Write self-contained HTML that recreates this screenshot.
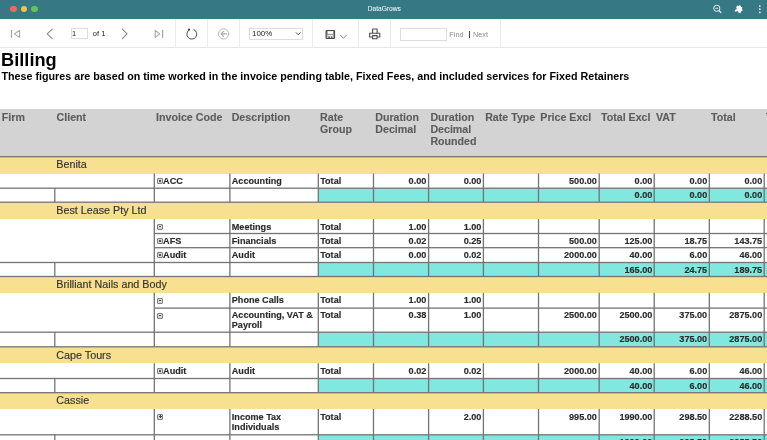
<!DOCTYPE html>
<html><head><meta charset="utf-8">
<style>
html,body{margin:0;padding:0;}
body{width:767px;height:440px;overflow:hidden;position:relative;background:#fff;font-family:"Liberation Sans",sans-serif;}
.t{position:absolute;white-space:nowrap;}
#root{position:absolute;left:0;top:0;width:767px;height:440px;will-change:transform;}
.ic{position:absolute;width:4px;height:4px;border:1px solid #808080;border-radius:1px;background:#d6d6d6;}
.ic i{position:absolute;left:1px;top:1.2px;width:2px;height:1.6px;background:#555;}
.ic i.p{left:0.5px;top:1.6px;width:3px;height:0.8px;background:#444;}
.ic i.p::after{content:"";position:absolute;left:1.1px;top:-1.1px;width:0.8px;height:3px;background:#444;}
#title{position:absolute;left:0;top:0;width:767px;height:19px;background:#367884;}
#tb{position:absolute;left:0;top:19px;width:767px;height:28px;background:#fff;border-bottom:1px solid #e6e6e6;}
.sep{position:absolute;top:19px;width:1px;height:28px;background:#ebebeb;}
</style></head><body><div id="root">
<div id="title">
  <div style="position:absolute;left:10.4px;top:5.8px;width:6.6px;height:6.6px;border-radius:50%;background:#ed6a5e;"></div>
  <div style="position:absolute;left:20.8px;top:5.8px;width:6.6px;height:6.6px;border-radius:50%;background:#f5bf4f;"></div>
  <div style="position:absolute;left:31.4px;top:5.8px;width:6.6px;height:6.6px;border-radius:50%;background:#61c454;"></div>
  <div class="t" style="left:0.8px;width:767px;text-align:center;top:4.4px;font-size:6.6px;line-height:9px;color:#e6eff0;-webkit-text-stroke:0.1px #e6eff0;">DataGrows</div>
  <svg style="position:absolute;left:0;top:0" width="767" height="19" viewBox="0 0 767 19">
    <circle cx="716.8" cy="8.3" r="3.1" fill="none" stroke="#e8f0f1" stroke-width="1"/>
    <path d="M715.3 8.3H718.3" stroke="#e8f0f1" stroke-width="0.9"/>
    <path d="M719 10.6L720.9 12.5" stroke="#e8f0f1" stroke-width="1.2" stroke-linecap="round"/>
    <path d="M736.2 6.3h1.6a1.1 1.1 0 0 1 2.2 0h1.6v1.8a1.1 1.1 0 0 1 0 2.2v2.2h-2.2a1.1 1.1 0 0 0-2.2 0h-1.6v-1.8a1.1 1.1 0 0 0 0-2.2Z" fill="#fff" transform="rotate(20 738.9 9.2)"/>
    <circle cx="759.8" cy="6" r="0.85" fill="#fff"/>
    <circle cx="759.8" cy="9.2" r="0.85" fill="#fff"/>
    <circle cx="759.8" cy="12.4" r="0.85" fill="#fff"/>
  </svg>
</div>
<div id="tb"></div>
<div class="sep" style="left:174.8px"></div>
<div class="sep" style="left:207px"></div>
<div class="sep" style="left:239.2px"></div>
<div class="sep" style="left:311.8px"></div>
<div class="sep" style="left:357.9px"></div>
<div class="sep" style="left:389.9px"></div>
<div class="sep" style="left:499.8px"></div>
<svg style="position:absolute;left:0;top:0" width="767" height="48" viewBox="0 0 767 48">
 <g fill="none" stroke-linecap="round" stroke-linejoin="round">
  <path d="M11.5 30.3V37.5" stroke="#a8a8a8" stroke-width="1.2"/>
  <path d="M19.5 30.5L14.3 33.9L19.5 37.4Z" stroke="#a8a8a8" stroke-width="1.1"/>
  <path d="M52.2 29.2L47.2 33.9L52.2 38.6" stroke="#8a8a8a" stroke-width="1.1"/>
  <path d="M122.3 29.2L127.1 33.9L122.3 38.6" stroke="#8a8a8a" stroke-width="1.1"/>
  <path d="M155.2 30.5L159.7 33.9L155.2 37.4Z" stroke="#a8a8a8" stroke-width="1.1"/>
  <path d="M162.6 30.3V37.5" stroke="#a8a8a8" stroke-width="1.2"/>
  <path d="M189.4 29.7A5 5 0 1 0 193.8 29.5" stroke="#4a4a4a" stroke-width="0.95"/>
  <circle cx="189.1" cy="29.5" r="0.95" fill="#222" stroke="none"/>
  <circle cx="223.6" cy="33.9" r="5.1" stroke="#b8b8b8" stroke-width="1"/>
  <path d="M226.6 33.9H221.3M223.4 31.3L221.1 33.9L223.4 36.4" stroke="#aaaaaa" stroke-width="1.15"/>
  <rect x="326.1" y="30.5" width="8.4" height="8" rx="0.8" fill="#9a9a9a" stroke="#4a4a4a" stroke-width="1.2"/>
  <rect x="327.8" y="31.2" width="5.2" height="2.6" fill="#fff" stroke="none"/>
  <rect x="327.5" y="35.2" width="5.7" height="2.7" fill="#fff" stroke="none"/>
  <rect x="328.2" y="36.4" width="1.8" height="1.5" fill="#555" stroke="none"/>
  <rect x="330.8" y="36.4" width="1.8" height="1.5" fill="#555" stroke="none"/>
  <path d="M340.6 35.4L343.4 38.3L346.2 35.4" stroke="#777" stroke-width="0.9"/>
  <path d="M296.2 32.7L298.2 34.8L300.2 32.7" stroke="#444" stroke-width="0.95"/>
  <path d="M372.6 33V29H377.1V33" stroke="#505050" stroke-width="1.1"/>
  <path d="M372.2 37H369.6V33.2H379.8V37H377.4" stroke="#505050" stroke-width="1.1"/>
  <path d="M372.6 35.6H377.1V38.7H372.6Z" stroke="#505050" stroke-width="1.1"/>
 </g>
</svg>
<div style="position:absolute;left:70.8px;top:28.3px;width:14.9px;height:9.2px;border:1px solid #ddd;"></div>
<div class="t" style="left:72px;top:29.2px;font-size:7.5px;line-height:10px;color:#222;">1</div>
<div class="t" style="left:92.8px;top:29.2px;font-size:7.5px;line-height:10px;color:#222;">of 1</div>
<div style="position:absolute;left:249.3px;top:28.2px;width:51.6px;height:10.3px;border:1px solid #ddd;"></div>
<div class="t" style="left:252px;top:29.2px;font-size:7.9px;line-height:10px;color:#222;">100%</div>
<div style="position:absolute;left:400px;top:28.3px;width:44.6px;height:10.5px;border:1px solid #ddd;"></div>
<div class="t" style="left:449.3px;top:29.6px;font-size:7.3px;line-height:10px;color:#8c8c8c;">Find</div>
<div style="position:absolute;left:469px;top:30.5px;width:1px;height:7px;background:#444;"></div>
<div class="t" style="left:473px;top:29.6px;font-size:7.3px;line-height:10px;color:#8c8c8c;">Next</div>
<div class="t" style="left:1.1px;top:49.5px;font-size:18.2px;line-height:21px;font-weight:bold;color:#000;">Billing</div>
<div class="t" style="left:1.5px;top:70px;font-size:10.72px;line-height:12px;font-weight:bold;color:#000;">These figures are based on time worked in the invoice pending table, Fixed Fees, and included services for Fixed Retainers</div>
<div style="position:absolute;left:0.00px;top:108.80px;width:767.00px;height:47.70px;background:#d3d3d3"></div>
<div style="position:absolute;left:0.00px;top:156.50px;width:767.00px;height:17.00px;background:#f7e08f"></div>
<div style="position:absolute;left:318.30px;top:188.00px;width:448.70px;height:14.00px;background:#80e8df"></div>
<div style="position:absolute;left:0.00px;top:202.00px;width:767.00px;height:17.00px;background:#f7e08f"></div>
<div style="position:absolute;left:318.30px;top:262.30px;width:448.70px;height:14.00px;background:#80e8df"></div>
<div style="position:absolute;left:0.00px;top:276.30px;width:767.00px;height:16.50px;background:#f7e08f"></div>
<div style="position:absolute;left:318.30px;top:332.00px;width:448.70px;height:14.60px;background:#80e8df"></div>
<div style="position:absolute;left:0.00px;top:346.60px;width:767.00px;height:16.60px;background:#f7e08f"></div>
<div style="position:absolute;left:318.30px;top:378.30px;width:448.70px;height:14.20px;background:#80e8df"></div>
<div style="position:absolute;left:0.00px;top:392.50px;width:767.00px;height:16.50px;background:#f7e08f"></div>
<div style="position:absolute;left:318.30px;top:434.60px;width:448.70px;height:14.40px;background:#80e8df"></div>
<svg style="position:absolute;left:0;top:0" width="767" height="440" viewBox="0 0 767 440"><g fill="#747474"><rect x="0.00" y="156.05" width="767.00" height="1.3"/><rect x="154.30" y="187.55" width="612.70" height="1.3"/><rect x="153.65" y="173.50" width="1.3" height="14.50"/><rect x="229.25" y="173.50" width="1.3" height="14.50"/><rect x="317.65" y="173.50" width="1.3" height="14.50"/><rect x="372.85" y="173.50" width="1.3" height="14.50"/><rect x="427.95" y="173.50" width="1.3" height="14.50"/><rect x="482.75" y="173.50" width="1.3" height="14.50"/><rect x="537.85" y="173.50" width="1.3" height="14.50"/><rect x="598.55" y="173.50" width="1.3" height="14.50"/><rect x="653.55" y="173.50" width="1.3" height="14.50"/><rect x="708.65" y="173.50" width="1.3" height="14.50"/><rect x="763.55" y="173.50" width="1.3" height="14.50"/><rect x="0.00" y="187.55" width="154.30" height="1.3"/><rect x="0.00" y="201.55" width="767.00" height="1.3"/><rect x="54.15" y="188.00" width="1.3" height="14.00"/><rect x="153.65" y="188.00" width="1.3" height="14.00"/><rect x="229.25" y="188.00" width="1.3" height="14.00"/><rect x="317.65" y="188.00" width="1.3" height="14.00"/><rect x="372.85" y="188.00" width="1.3" height="14.00"/><rect x="427.95" y="188.00" width="1.3" height="14.00"/><rect x="482.75" y="188.00" width="1.3" height="14.00"/><rect x="537.85" y="188.00" width="1.3" height="14.00"/><rect x="598.55" y="188.00" width="1.3" height="14.00"/><rect x="653.55" y="188.00" width="1.3" height="14.00"/><rect x="708.65" y="188.00" width="1.3" height="14.00"/><rect x="763.55" y="188.00" width="1.3" height="14.00"/><rect x="154.30" y="232.85" width="612.70" height="1.3"/><rect x="153.65" y="219.00" width="1.3" height="14.30"/><rect x="229.25" y="219.00" width="1.3" height="14.30"/><rect x="317.65" y="219.00" width="1.3" height="14.30"/><rect x="372.85" y="219.00" width="1.3" height="14.30"/><rect x="427.95" y="219.00" width="1.3" height="14.30"/><rect x="482.75" y="219.00" width="1.3" height="14.30"/><rect x="537.85" y="219.00" width="1.3" height="14.30"/><rect x="598.55" y="219.00" width="1.3" height="14.30"/><rect x="653.55" y="219.00" width="1.3" height="14.30"/><rect x="708.65" y="219.00" width="1.3" height="14.30"/><rect x="763.55" y="219.00" width="1.3" height="14.30"/><rect x="154.30" y="247.05" width="612.70" height="1.3"/><rect x="153.65" y="233.30" width="1.3" height="14.20"/><rect x="229.25" y="233.30" width="1.3" height="14.20"/><rect x="317.65" y="233.30" width="1.3" height="14.20"/><rect x="372.85" y="233.30" width="1.3" height="14.20"/><rect x="427.95" y="233.30" width="1.3" height="14.20"/><rect x="482.75" y="233.30" width="1.3" height="14.20"/><rect x="537.85" y="233.30" width="1.3" height="14.20"/><rect x="598.55" y="233.30" width="1.3" height="14.20"/><rect x="653.55" y="233.30" width="1.3" height="14.20"/><rect x="708.65" y="233.30" width="1.3" height="14.20"/><rect x="763.55" y="233.30" width="1.3" height="14.20"/><rect x="154.30" y="261.85" width="612.70" height="1.3"/><rect x="153.65" y="247.50" width="1.3" height="14.80"/><rect x="229.25" y="247.50" width="1.3" height="14.80"/><rect x="317.65" y="247.50" width="1.3" height="14.80"/><rect x="372.85" y="247.50" width="1.3" height="14.80"/><rect x="427.95" y="247.50" width="1.3" height="14.80"/><rect x="482.75" y="247.50" width="1.3" height="14.80"/><rect x="537.85" y="247.50" width="1.3" height="14.80"/><rect x="598.55" y="247.50" width="1.3" height="14.80"/><rect x="653.55" y="247.50" width="1.3" height="14.80"/><rect x="708.65" y="247.50" width="1.3" height="14.80"/><rect x="763.55" y="247.50" width="1.3" height="14.80"/><rect x="0.00" y="261.85" width="154.30" height="1.3"/><rect x="0.00" y="275.85" width="767.00" height="1.3"/><rect x="54.15" y="262.30" width="1.3" height="14.00"/><rect x="153.65" y="262.30" width="1.3" height="14.00"/><rect x="229.25" y="262.30" width="1.3" height="14.00"/><rect x="317.65" y="262.30" width="1.3" height="14.00"/><rect x="372.85" y="262.30" width="1.3" height="14.00"/><rect x="427.95" y="262.30" width="1.3" height="14.00"/><rect x="482.75" y="262.30" width="1.3" height="14.00"/><rect x="537.85" y="262.30" width="1.3" height="14.00"/><rect x="598.55" y="262.30" width="1.3" height="14.00"/><rect x="653.55" y="262.30" width="1.3" height="14.00"/><rect x="708.65" y="262.30" width="1.3" height="14.00"/><rect x="763.55" y="262.30" width="1.3" height="14.00"/><rect x="154.30" y="307.45" width="612.70" height="1.3"/><rect x="153.65" y="292.80" width="1.3" height="15.10"/><rect x="229.25" y="292.80" width="1.3" height="15.10"/><rect x="317.65" y="292.80" width="1.3" height="15.10"/><rect x="372.85" y="292.80" width="1.3" height="15.10"/><rect x="427.95" y="292.80" width="1.3" height="15.10"/><rect x="482.75" y="292.80" width="1.3" height="15.10"/><rect x="537.85" y="292.80" width="1.3" height="15.10"/><rect x="598.55" y="292.80" width="1.3" height="15.10"/><rect x="653.55" y="292.80" width="1.3" height="15.10"/><rect x="708.65" y="292.80" width="1.3" height="15.10"/><rect x="763.55" y="292.80" width="1.3" height="15.10"/><rect x="154.30" y="331.55" width="612.70" height="1.3"/><rect x="153.65" y="307.90" width="1.3" height="24.10"/><rect x="229.25" y="307.90" width="1.3" height="24.10"/><rect x="317.65" y="307.90" width="1.3" height="24.10"/><rect x="372.85" y="307.90" width="1.3" height="24.10"/><rect x="427.95" y="307.90" width="1.3" height="24.10"/><rect x="482.75" y="307.90" width="1.3" height="24.10"/><rect x="537.85" y="307.90" width="1.3" height="24.10"/><rect x="598.55" y="307.90" width="1.3" height="24.10"/><rect x="653.55" y="307.90" width="1.3" height="24.10"/><rect x="708.65" y="307.90" width="1.3" height="24.10"/><rect x="763.55" y="307.90" width="1.3" height="24.10"/><rect x="0.00" y="331.55" width="154.30" height="1.3"/><rect x="0.00" y="346.15" width="767.00" height="1.3"/><rect x="54.15" y="332.00" width="1.3" height="14.60"/><rect x="153.65" y="332.00" width="1.3" height="14.60"/><rect x="229.25" y="332.00" width="1.3" height="14.60"/><rect x="317.65" y="332.00" width="1.3" height="14.60"/><rect x="372.85" y="332.00" width="1.3" height="14.60"/><rect x="427.95" y="332.00" width="1.3" height="14.60"/><rect x="482.75" y="332.00" width="1.3" height="14.60"/><rect x="537.85" y="332.00" width="1.3" height="14.60"/><rect x="598.55" y="332.00" width="1.3" height="14.60"/><rect x="653.55" y="332.00" width="1.3" height="14.60"/><rect x="708.65" y="332.00" width="1.3" height="14.60"/><rect x="763.55" y="332.00" width="1.3" height="14.60"/><rect x="154.30" y="377.85" width="612.70" height="1.3"/><rect x="153.65" y="363.20" width="1.3" height="15.10"/><rect x="229.25" y="363.20" width="1.3" height="15.10"/><rect x="317.65" y="363.20" width="1.3" height="15.10"/><rect x="372.85" y="363.20" width="1.3" height="15.10"/><rect x="427.95" y="363.20" width="1.3" height="15.10"/><rect x="482.75" y="363.20" width="1.3" height="15.10"/><rect x="537.85" y="363.20" width="1.3" height="15.10"/><rect x="598.55" y="363.20" width="1.3" height="15.10"/><rect x="653.55" y="363.20" width="1.3" height="15.10"/><rect x="708.65" y="363.20" width="1.3" height="15.10"/><rect x="763.55" y="363.20" width="1.3" height="15.10"/><rect x="0.00" y="377.85" width="154.30" height="1.3"/><rect x="0.00" y="392.05" width="767.00" height="1.3"/><rect x="54.15" y="378.30" width="1.3" height="14.20"/><rect x="153.65" y="378.30" width="1.3" height="14.20"/><rect x="229.25" y="378.30" width="1.3" height="14.20"/><rect x="317.65" y="378.30" width="1.3" height="14.20"/><rect x="372.85" y="378.30" width="1.3" height="14.20"/><rect x="427.95" y="378.30" width="1.3" height="14.20"/><rect x="482.75" y="378.30" width="1.3" height="14.20"/><rect x="537.85" y="378.30" width="1.3" height="14.20"/><rect x="598.55" y="378.30" width="1.3" height="14.20"/><rect x="653.55" y="378.30" width="1.3" height="14.20"/><rect x="708.65" y="378.30" width="1.3" height="14.20"/><rect x="763.55" y="378.30" width="1.3" height="14.20"/><rect x="154.30" y="434.15" width="612.70" height="1.3"/><rect x="153.65" y="409.00" width="1.3" height="25.60"/><rect x="229.25" y="409.00" width="1.3" height="25.60"/><rect x="317.65" y="409.00" width="1.3" height="25.60"/><rect x="372.85" y="409.00" width="1.3" height="25.60"/><rect x="427.95" y="409.00" width="1.3" height="25.60"/><rect x="482.75" y="409.00" width="1.3" height="25.60"/><rect x="537.85" y="409.00" width="1.3" height="25.60"/><rect x="598.55" y="409.00" width="1.3" height="25.60"/><rect x="653.55" y="409.00" width="1.3" height="25.60"/><rect x="708.65" y="409.00" width="1.3" height="25.60"/><rect x="763.55" y="409.00" width="1.3" height="25.60"/><rect x="0.00" y="434.15" width="154.30" height="1.3"/><rect x="0.00" y="448.55" width="767.00" height="1.3"/><rect x="54.15" y="434.60" width="1.3" height="14.40"/><rect x="153.65" y="434.60" width="1.3" height="14.40"/><rect x="229.25" y="434.60" width="1.3" height="14.40"/><rect x="317.65" y="434.60" width="1.3" height="14.40"/><rect x="372.85" y="434.60" width="1.3" height="14.40"/><rect x="427.95" y="434.60" width="1.3" height="14.40"/><rect x="482.75" y="434.60" width="1.3" height="14.40"/><rect x="537.85" y="434.60" width="1.3" height="14.40"/><rect x="598.55" y="434.60" width="1.3" height="14.40"/><rect x="653.55" y="434.60" width="1.3" height="14.40"/><rect x="708.65" y="434.60" width="1.3" height="14.40"/><rect x="763.55" y="434.60" width="1.3" height="14.40"/></g></svg>
<div class="t" style="left:1.80px;top:110.90px;font-weight:bold;color:#5c5c5c;font-size:10.65px;line-height:12.2px;-webkit-text-stroke:0.12px #5c5c5c;">Firm</div>
<div class="t" style="left:56.60px;top:110.90px;font-weight:bold;color:#5c5c5c;font-size:10.65px;line-height:12.2px;-webkit-text-stroke:0.12px #5c5c5c;">Client</div>
<div class="t" style="left:156.10px;top:110.90px;font-weight:bold;color:#5c5c5c;font-size:10.65px;line-height:12.2px;-webkit-text-stroke:0.12px #5c5c5c;">Invoice Code</div>
<div class="t" style="left:231.70px;top:110.90px;font-weight:bold;color:#5c5c5c;font-size:10.65px;line-height:12.2px;-webkit-text-stroke:0.12px #5c5c5c;">Description</div>
<div class="t" style="left:320.10px;top:110.90px;font-weight:bold;color:#5c5c5c;font-size:10.65px;line-height:12.2px;-webkit-text-stroke:0.12px #5c5c5c;">Rate<br>Group</div>
<div class="t" style="left:375.30px;top:110.90px;font-weight:bold;color:#5c5c5c;font-size:10.65px;line-height:12.2px;-webkit-text-stroke:0.12px #5c5c5c;">Duration<br>Decimal</div>
<div class="t" style="left:430.40px;top:110.90px;font-weight:bold;color:#5c5c5c;font-size:10.65px;line-height:12.2px;-webkit-text-stroke:0.12px #5c5c5c;">Duration<br>Decimal<br>Rounded</div>
<div class="t" style="left:485.20px;top:110.90px;font-weight:bold;color:#5c5c5c;font-size:10.65px;line-height:12.2px;-webkit-text-stroke:0.12px #5c5c5c;">Rate Type</div>
<div class="t" style="left:540.30px;top:110.90px;font-weight:bold;color:#5c5c5c;font-size:10.65px;line-height:12.2px;-webkit-text-stroke:0.12px #5c5c5c;">Price Excl</div>
<div class="t" style="left:601.00px;top:110.90px;font-weight:bold;color:#5c5c5c;font-size:10.65px;line-height:12.2px;-webkit-text-stroke:0.12px #5c5c5c;">Total Excl</div>
<div class="t" style="left:656.00px;top:110.90px;font-weight:bold;color:#5c5c5c;font-size:10.65px;line-height:12.2px;-webkit-text-stroke:0.12px #5c5c5c;">VAT</div>
<div class="t" style="left:711.10px;top:110.90px;font-weight:bold;color:#5c5c5c;font-size:10.65px;line-height:12.2px;-webkit-text-stroke:0.12px #5c5c5c;">Total</div>
<div class="t" style="left:766.00px;top:110.90px;font-weight:bold;color:#5c5c5c;font-size:10.65px;line-height:12.2px;-webkit-text-stroke:0.12px #5c5c5c;">Total</div>
<div class="t" style="left:56.30px;top:158.40px;color:#333;font-size:10.75px;line-height:12px;-webkit-text-stroke:0.15px #333;">Benita</div>
<div class="ic" style="left:157.10px;top:178.20px"><i class="m"></i></div>
<div class="t" style="left:163.10px;top:176.10px;font-weight:bold;color:#2a2a2a;font-size:9.1px;line-height:10.3px;-webkit-text-stroke:0.15px #2a2a2a;">ACC</div>
<div class="t" style="left:231.80px;top:176.10px;font-weight:bold;color:#2a2a2a;font-size:9.1px;line-height:10.3px;-webkit-text-stroke:0.15px #2a2a2a;">Accounting</div>
<div class="t" style="left:320.20px;top:176.10px;font-weight:bold;color:#2a2a2a;font-size:9.1px;line-height:10.3px;-webkit-text-stroke:0.15px #2a2a2a;">Total</div>
<div class="t" style="left:373.50px;top:176.10px;width:52.80px;text-align:right;font-weight:bold;color:#2a2a2a;font-size:9.1px;line-height:10.3px;-webkit-text-stroke:0.15px #2a2a2a;">0.00</div>
<div class="t" style="left:428.60px;top:176.10px;width:52.80px;text-align:right;font-weight:bold;color:#2a2a2a;font-size:9.1px;line-height:10.3px;-webkit-text-stroke:0.15px #2a2a2a;">0.00</div>
<div class="t" style="left:538.50px;top:176.10px;width:58.40px;text-align:right;font-weight:bold;color:#2a2a2a;font-size:9.1px;line-height:10.3px;-webkit-text-stroke:0.15px #2a2a2a;">500.00</div>
<div class="t" style="left:599.20px;top:176.10px;width:53.10px;text-align:right;font-weight:bold;color:#2a2a2a;font-size:9.1px;line-height:10.3px;-webkit-text-stroke:0.15px #2a2a2a;">0.00</div>
<div class="t" style="left:654.20px;top:176.10px;width:53.00px;text-align:right;font-weight:bold;color:#2a2a2a;font-size:9.1px;line-height:10.3px;-webkit-text-stroke:0.15px #2a2a2a;">0.00</div>
<div class="t" style="left:709.30px;top:176.10px;width:52.90px;text-align:right;font-weight:bold;color:#2a2a2a;font-size:9.1px;line-height:10.3px;-webkit-text-stroke:0.15px #2a2a2a;">0.00</div>
<div class="t" style="left:599.20px;top:190.20px;width:53.10px;text-align:right;font-weight:bold;color:#2a2a2a;font-size:9.1px;line-height:10.3px;-webkit-text-stroke:0.15px #2a2a2a;">0.00</div>
<div class="t" style="left:654.20px;top:190.20px;width:53.00px;text-align:right;font-weight:bold;color:#2a2a2a;font-size:9.1px;line-height:10.3px;-webkit-text-stroke:0.15px #2a2a2a;">0.00</div>
<div class="t" style="left:709.30px;top:190.20px;width:52.90px;text-align:right;font-weight:bold;color:#2a2a2a;font-size:9.1px;line-height:10.3px;-webkit-text-stroke:0.15px #2a2a2a;">0.00</div>
<div class="t" style="left:56.30px;top:203.90px;color:#333;font-size:10.75px;line-height:12px;-webkit-text-stroke:0.15px #333;">Best Lease Pty Ltd</div>
<div class="ic" style="left:157.10px;top:223.70px"><i class="m"></i></div>
<div class="t" style="left:231.80px;top:221.60px;font-weight:bold;color:#2a2a2a;font-size:9.1px;line-height:10.3px;-webkit-text-stroke:0.15px #2a2a2a;">Meetings</div>
<div class="t" style="left:320.20px;top:221.60px;font-weight:bold;color:#2a2a2a;font-size:9.1px;line-height:10.3px;-webkit-text-stroke:0.15px #2a2a2a;">Total</div>
<div class="t" style="left:373.50px;top:221.60px;width:52.80px;text-align:right;font-weight:bold;color:#2a2a2a;font-size:9.1px;line-height:10.3px;-webkit-text-stroke:0.15px #2a2a2a;">1.00</div>
<div class="t" style="left:428.60px;top:221.60px;width:52.80px;text-align:right;font-weight:bold;color:#2a2a2a;font-size:9.1px;line-height:10.3px;-webkit-text-stroke:0.15px #2a2a2a;">1.00</div>
<div class="ic" style="left:157.10px;top:238.00px"><i class="m"></i></div>
<div class="t" style="left:163.10px;top:235.90px;font-weight:bold;color:#2a2a2a;font-size:9.1px;line-height:10.3px;-webkit-text-stroke:0.15px #2a2a2a;">AFS</div>
<div class="t" style="left:231.80px;top:235.90px;font-weight:bold;color:#2a2a2a;font-size:9.1px;line-height:10.3px;-webkit-text-stroke:0.15px #2a2a2a;">Financials</div>
<div class="t" style="left:320.20px;top:235.90px;font-weight:bold;color:#2a2a2a;font-size:9.1px;line-height:10.3px;-webkit-text-stroke:0.15px #2a2a2a;">Total</div>
<div class="t" style="left:373.50px;top:235.90px;width:52.80px;text-align:right;font-weight:bold;color:#2a2a2a;font-size:9.1px;line-height:10.3px;-webkit-text-stroke:0.15px #2a2a2a;">0.02</div>
<div class="t" style="left:428.60px;top:235.90px;width:52.80px;text-align:right;font-weight:bold;color:#2a2a2a;font-size:9.1px;line-height:10.3px;-webkit-text-stroke:0.15px #2a2a2a;">0.25</div>
<div class="t" style="left:538.50px;top:235.90px;width:58.40px;text-align:right;font-weight:bold;color:#2a2a2a;font-size:9.1px;line-height:10.3px;-webkit-text-stroke:0.15px #2a2a2a;">500.00</div>
<div class="t" style="left:599.20px;top:235.90px;width:53.10px;text-align:right;font-weight:bold;color:#2a2a2a;font-size:9.1px;line-height:10.3px;-webkit-text-stroke:0.15px #2a2a2a;">125.00</div>
<div class="t" style="left:654.20px;top:235.90px;width:53.00px;text-align:right;font-weight:bold;color:#2a2a2a;font-size:9.1px;line-height:10.3px;-webkit-text-stroke:0.15px #2a2a2a;">18.75</div>
<div class="t" style="left:709.30px;top:235.90px;width:52.90px;text-align:right;font-weight:bold;color:#2a2a2a;font-size:9.1px;line-height:10.3px;-webkit-text-stroke:0.15px #2a2a2a;">143.75</div>
<div class="ic" style="left:157.10px;top:252.20px"><i class="m"></i></div>
<div class="t" style="left:163.10px;top:250.10px;font-weight:bold;color:#2a2a2a;font-size:9.1px;line-height:10.3px;-webkit-text-stroke:0.15px #2a2a2a;">Audit</div>
<div class="t" style="left:231.80px;top:250.10px;font-weight:bold;color:#2a2a2a;font-size:9.1px;line-height:10.3px;-webkit-text-stroke:0.15px #2a2a2a;">Audit</div>
<div class="t" style="left:320.20px;top:250.10px;font-weight:bold;color:#2a2a2a;font-size:9.1px;line-height:10.3px;-webkit-text-stroke:0.15px #2a2a2a;">Total</div>
<div class="t" style="left:373.50px;top:250.10px;width:52.80px;text-align:right;font-weight:bold;color:#2a2a2a;font-size:9.1px;line-height:10.3px;-webkit-text-stroke:0.15px #2a2a2a;">0.00</div>
<div class="t" style="left:428.60px;top:250.10px;width:52.80px;text-align:right;font-weight:bold;color:#2a2a2a;font-size:9.1px;line-height:10.3px;-webkit-text-stroke:0.15px #2a2a2a;">0.02</div>
<div class="t" style="left:538.50px;top:250.10px;width:58.40px;text-align:right;font-weight:bold;color:#2a2a2a;font-size:9.1px;line-height:10.3px;-webkit-text-stroke:0.15px #2a2a2a;">2000.00</div>
<div class="t" style="left:599.20px;top:250.10px;width:53.10px;text-align:right;font-weight:bold;color:#2a2a2a;font-size:9.1px;line-height:10.3px;-webkit-text-stroke:0.15px #2a2a2a;">40.00</div>
<div class="t" style="left:654.20px;top:250.10px;width:53.00px;text-align:right;font-weight:bold;color:#2a2a2a;font-size:9.1px;line-height:10.3px;-webkit-text-stroke:0.15px #2a2a2a;">6.00</div>
<div class="t" style="left:709.30px;top:250.10px;width:52.90px;text-align:right;font-weight:bold;color:#2a2a2a;font-size:9.1px;line-height:10.3px;-webkit-text-stroke:0.15px #2a2a2a;">46.00</div>
<div class="t" style="left:599.20px;top:264.50px;width:53.10px;text-align:right;font-weight:bold;color:#2a2a2a;font-size:9.1px;line-height:10.3px;-webkit-text-stroke:0.15px #2a2a2a;">165.00</div>
<div class="t" style="left:654.20px;top:264.50px;width:53.00px;text-align:right;font-weight:bold;color:#2a2a2a;font-size:9.1px;line-height:10.3px;-webkit-text-stroke:0.15px #2a2a2a;">24.75</div>
<div class="t" style="left:709.30px;top:264.50px;width:52.90px;text-align:right;font-weight:bold;color:#2a2a2a;font-size:9.1px;line-height:10.3px;-webkit-text-stroke:0.15px #2a2a2a;">189.75</div>
<div class="t" style="left:56.30px;top:278.20px;color:#333;font-size:10.75px;line-height:12px;-webkit-text-stroke:0.15px #333;">Brilliant Nails and Body</div>
<div class="ic" style="left:157.10px;top:297.50px"><i class="m"></i></div>
<div class="t" style="left:231.80px;top:295.40px;font-weight:bold;color:#2a2a2a;font-size:9.1px;line-height:10.3px;-webkit-text-stroke:0.15px #2a2a2a;">Phone Calls</div>
<div class="t" style="left:320.20px;top:295.40px;font-weight:bold;color:#2a2a2a;font-size:9.1px;line-height:10.3px;-webkit-text-stroke:0.15px #2a2a2a;">Total</div>
<div class="t" style="left:373.50px;top:295.40px;width:52.80px;text-align:right;font-weight:bold;color:#2a2a2a;font-size:9.1px;line-height:10.3px;-webkit-text-stroke:0.15px #2a2a2a;">1.00</div>
<div class="t" style="left:428.60px;top:295.40px;width:52.80px;text-align:right;font-weight:bold;color:#2a2a2a;font-size:9.1px;line-height:10.3px;-webkit-text-stroke:0.15px #2a2a2a;">1.00</div>
<div class="ic" style="left:157.10px;top:312.60px"><i class="m"></i></div>
<div class="t" style="left:231.80px;top:309.60px;font-weight:bold;color:#2a2a2a;font-size:9.1px;line-height:10.3px;-webkit-text-stroke:0.15px #2a2a2a;">Accounting, VAT &amp;<br>Payroll</div>
<div class="t" style="left:320.20px;top:309.60px;font-weight:bold;color:#2a2a2a;font-size:9.1px;line-height:10.3px;-webkit-text-stroke:0.15px #2a2a2a;">Total</div>
<div class="t" style="left:373.50px;top:309.60px;width:52.80px;text-align:right;font-weight:bold;color:#2a2a2a;font-size:9.1px;line-height:10.3px;-webkit-text-stroke:0.15px #2a2a2a;">0.38</div>
<div class="t" style="left:428.60px;top:309.60px;width:52.80px;text-align:right;font-weight:bold;color:#2a2a2a;font-size:9.1px;line-height:10.3px;-webkit-text-stroke:0.15px #2a2a2a;">1.00</div>
<div class="t" style="left:538.50px;top:309.60px;width:58.40px;text-align:right;font-weight:bold;color:#2a2a2a;font-size:9.1px;line-height:10.3px;-webkit-text-stroke:0.15px #2a2a2a;">2500.00</div>
<div class="t" style="left:599.20px;top:309.60px;width:53.10px;text-align:right;font-weight:bold;color:#2a2a2a;font-size:9.1px;line-height:10.3px;-webkit-text-stroke:0.15px #2a2a2a;">2500.00</div>
<div class="t" style="left:654.20px;top:309.60px;width:53.00px;text-align:right;font-weight:bold;color:#2a2a2a;font-size:9.1px;line-height:10.3px;-webkit-text-stroke:0.15px #2a2a2a;">375.00</div>
<div class="t" style="left:709.30px;top:309.60px;width:52.90px;text-align:right;font-weight:bold;color:#2a2a2a;font-size:9.1px;line-height:10.3px;-webkit-text-stroke:0.15px #2a2a2a;">2875.00</div>
<div class="t" style="left:599.20px;top:334.20px;width:53.10px;text-align:right;font-weight:bold;color:#2a2a2a;font-size:9.1px;line-height:10.3px;-webkit-text-stroke:0.15px #2a2a2a;">2500.00</div>
<div class="t" style="left:654.20px;top:334.20px;width:53.00px;text-align:right;font-weight:bold;color:#2a2a2a;font-size:9.1px;line-height:10.3px;-webkit-text-stroke:0.15px #2a2a2a;">375.00</div>
<div class="t" style="left:709.30px;top:334.20px;width:52.90px;text-align:right;font-weight:bold;color:#2a2a2a;font-size:9.1px;line-height:10.3px;-webkit-text-stroke:0.15px #2a2a2a;">2875.00</div>
<div class="t" style="left:56.30px;top:348.50px;color:#333;font-size:10.75px;line-height:12px;-webkit-text-stroke:0.15px #333;">Cape Tours</div>
<div class="ic" style="left:157.10px;top:367.90px"><i class="m"></i></div>
<div class="t" style="left:163.10px;top:365.80px;font-weight:bold;color:#2a2a2a;font-size:9.1px;line-height:10.3px;-webkit-text-stroke:0.15px #2a2a2a;">Audit</div>
<div class="t" style="left:231.80px;top:365.80px;font-weight:bold;color:#2a2a2a;font-size:9.1px;line-height:10.3px;-webkit-text-stroke:0.15px #2a2a2a;">Audit</div>
<div class="t" style="left:320.20px;top:365.80px;font-weight:bold;color:#2a2a2a;font-size:9.1px;line-height:10.3px;-webkit-text-stroke:0.15px #2a2a2a;">Total</div>
<div class="t" style="left:373.50px;top:365.80px;width:52.80px;text-align:right;font-weight:bold;color:#2a2a2a;font-size:9.1px;line-height:10.3px;-webkit-text-stroke:0.15px #2a2a2a;">0.02</div>
<div class="t" style="left:428.60px;top:365.80px;width:52.80px;text-align:right;font-weight:bold;color:#2a2a2a;font-size:9.1px;line-height:10.3px;-webkit-text-stroke:0.15px #2a2a2a;">0.02</div>
<div class="t" style="left:538.50px;top:365.80px;width:58.40px;text-align:right;font-weight:bold;color:#2a2a2a;font-size:9.1px;line-height:10.3px;-webkit-text-stroke:0.15px #2a2a2a;">2000.00</div>
<div class="t" style="left:599.20px;top:365.80px;width:53.10px;text-align:right;font-weight:bold;color:#2a2a2a;font-size:9.1px;line-height:10.3px;-webkit-text-stroke:0.15px #2a2a2a;">40.00</div>
<div class="t" style="left:654.20px;top:365.80px;width:53.00px;text-align:right;font-weight:bold;color:#2a2a2a;font-size:9.1px;line-height:10.3px;-webkit-text-stroke:0.15px #2a2a2a;">6.00</div>
<div class="t" style="left:709.30px;top:365.80px;width:52.90px;text-align:right;font-weight:bold;color:#2a2a2a;font-size:9.1px;line-height:10.3px;-webkit-text-stroke:0.15px #2a2a2a;">46.00</div>
<div class="t" style="left:599.20px;top:380.50px;width:53.10px;text-align:right;font-weight:bold;color:#2a2a2a;font-size:9.1px;line-height:10.3px;-webkit-text-stroke:0.15px #2a2a2a;">40.00</div>
<div class="t" style="left:654.20px;top:380.50px;width:53.00px;text-align:right;font-weight:bold;color:#2a2a2a;font-size:9.1px;line-height:10.3px;-webkit-text-stroke:0.15px #2a2a2a;">6.00</div>
<div class="t" style="left:709.30px;top:380.50px;width:52.90px;text-align:right;font-weight:bold;color:#2a2a2a;font-size:9.1px;line-height:10.3px;-webkit-text-stroke:0.15px #2a2a2a;">46.00</div>
<div class="t" style="left:56.30px;top:394.40px;color:#333;font-size:10.75px;line-height:12px;-webkit-text-stroke:0.15px #333;">Cassie</div>
<div class="ic" style="left:157.10px;top:413.70px"><i class="p"></i></div>
<div class="t" style="left:231.80px;top:411.60px;font-weight:bold;color:#2a2a2a;font-size:9.1px;line-height:10.3px;-webkit-text-stroke:0.15px #2a2a2a;">Income Tax<br>Individuals</div>
<div class="t" style="left:320.20px;top:411.60px;font-weight:bold;color:#2a2a2a;font-size:9.1px;line-height:10.3px;-webkit-text-stroke:0.15px #2a2a2a;">Total</div>
<div class="t" style="left:428.60px;top:411.60px;width:52.80px;text-align:right;font-weight:bold;color:#2a2a2a;font-size:9.1px;line-height:10.3px;-webkit-text-stroke:0.15px #2a2a2a;">2.00</div>
<div class="t" style="left:538.50px;top:411.60px;width:58.40px;text-align:right;font-weight:bold;color:#2a2a2a;font-size:9.1px;line-height:10.3px;-webkit-text-stroke:0.15px #2a2a2a;">995.00</div>
<div class="t" style="left:599.20px;top:411.60px;width:53.10px;text-align:right;font-weight:bold;color:#2a2a2a;font-size:9.1px;line-height:10.3px;-webkit-text-stroke:0.15px #2a2a2a;">1990.00</div>
<div class="t" style="left:654.20px;top:411.60px;width:53.00px;text-align:right;font-weight:bold;color:#2a2a2a;font-size:9.1px;line-height:10.3px;-webkit-text-stroke:0.15px #2a2a2a;">298.50</div>
<div class="t" style="left:709.30px;top:411.60px;width:52.90px;text-align:right;font-weight:bold;color:#2a2a2a;font-size:9.1px;line-height:10.3px;-webkit-text-stroke:0.15px #2a2a2a;">2288.50</div>
<div class="t" style="left:599.20px;top:436.80px;width:53.10px;text-align:right;font-weight:bold;color:#2a2a2a;font-size:9.1px;line-height:10.3px;-webkit-text-stroke:0.15px #2a2a2a;">1990.00</div>
<div class="t" style="left:654.20px;top:436.80px;width:53.00px;text-align:right;font-weight:bold;color:#2a2a2a;font-size:9.1px;line-height:10.3px;-webkit-text-stroke:0.15px #2a2a2a;">298.50</div>
<div class="t" style="left:709.30px;top:436.80px;width:52.90px;text-align:right;font-weight:bold;color:#2a2a2a;font-size:9.1px;line-height:10.3px;-webkit-text-stroke:0.15px #2a2a2a;">2288.50</div>
</div></body></html>
